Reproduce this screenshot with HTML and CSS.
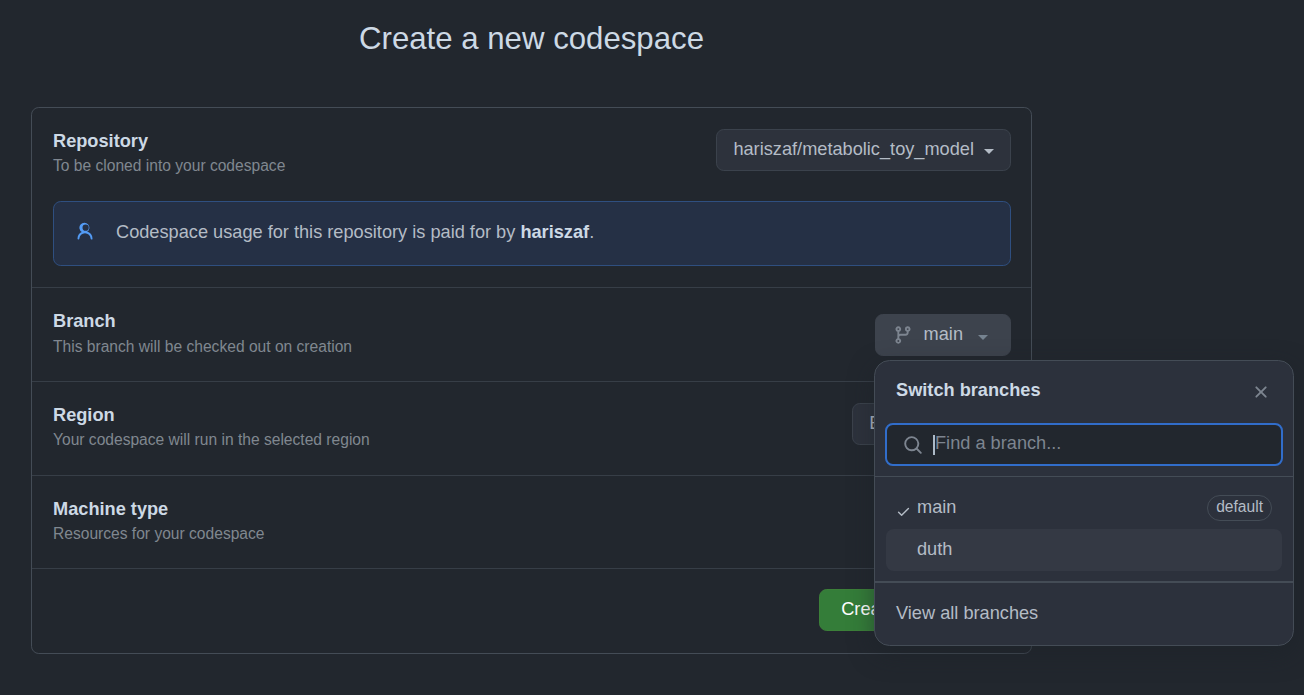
FILE: index.html
```html
<!DOCTYPE html>
<html lang="en">
<head>
    <meta charset="UTF-8">
    <title>Create a new codespace</title>
    <link rel="stylesheet" href="styles.css">
</head>
<body>
    <div class="page">
        <h1>Create a new codespace</h1>
        <div class="box">
            <div class="row row-repo">
                <div class="row-head">
                    <div>
                        <div class="label">Repository</div>
                        <div class="desc">To be cloned into your codespace</div>
                    </div>
                    <button class="button"><span class="button-text">hariszaf/metabolic_toy_model</span> <span class="caret"></span></button>
                </div>
                <div class="notice">
                    <svg class="notice-icon" width="20" height="20" viewBox="0 0 16 16"><path fill="currentColor" d="M10.561 8.073a6.005 6.005 0 0 1 3.432 5.142.75.75 0 1 1-1.498.07 4.5 4.5 0 0 0-8.99 0 .75.75 0 0 1-1.498-.07 6.004 6.004 0 0 1 3.431-5.142 3.999 3.999 0 1 1 4.123 0ZM11 4.5a2.5 2.5 0 1 0-5 0 2.5 2.5 0 0 0 5 0Z"/></svg>
                    <span class="notice-text">Codespace usage for this repository is paid for by <b>hariszaf</b>.</span>
                </div>
            </div>
            <div class="row row-head">
                <div class="row-text">
                    <div class="label">Branch</div>
                    <div class="desc">This branch will be checked out on creation</div>
                </div>
                <button class="button button-open">
                    <svg class="muted-icon" width="20" height="20" viewBox="0 0 16 16"><path fill="currentColor" d="M9.5 3.25a2.25 2.25 0 1 1 3 2.122V6A2.5 2.5 0 0 1 10 8.5H6a1 1 0 0 0-1 1v1.128a2.251 2.251 0 1 1-1.5 0V5.372a2.25 2.25 0 1 1 1.5 0v1.836A2.493 2.493 0 0 1 6 7h4a1 1 0 0 0 1-1v-.628A2.25 2.25 0 0 1 9.5 3.25Zm-6 0a.75.75 0 1 0 1.5 0 .75.75 0 0 0-1.5 0Zm8.25-.75a.75.75 0 1 0 0 1.5.75.75 0 0 0 0-1.5ZM4.25 12a.75.75 0 1 0 0 1.5.75.75 0 0 0 0-1.5Z"/></svg>
                    <span class="branch-name button-text">main</span>
                    <span class="caret caret-muted"></span>
                </button>
            </div>
            <div class="row row-head">
                <div>
                    <div class="label">Region</div>
                    <div class="desc">Your codespace will run in the selected region</div>
                </div>
                <button class="button"><span class="button-text">Europe West</span> <span class="caret"></span></button>
            </div>
            <div class="row row-head row-short">
                <div>
                    <div class="label">Machine type</div>
                    <div class="desc">Resources for your codespace</div>
                </div>
            </div>
            <div class="row row-foot">
                <button class="button-green"><span class="button-text">Create codespace</span></button>
            </div>
        </div>
    </div>

    <div class="overlay">
        <div class="overlay-head">
            <span class="overlay-title">Switch branches</span>
            <svg class="muted-icon" width="20" height="20" viewBox="0 0 16 16"><path fill="currentColor" d="M3.72 3.72a.75.75 0 0 1 1.06 0L8 6.94l3.22-3.22a.749.749 0 0 1 1.275.326.749.749 0 0 1-.215.734L9.06 8l3.22 3.22a.749.749 0 0 1-.326 1.275.749.749 0 0 1-.734-.215L8 9.06l-3.22 3.22a.751.751 0 0 1-1.042-.018.751.751 0 0 1-.018-1.042L6.94 8 3.72 4.78a.75.75 0 0 1 0-1.06Z"/></svg>
        </div>
        <div class="search">
            <svg class="muted-icon" width="20" height="20" viewBox="0 0 16 16"><path fill="currentColor" d="M10.68 11.74a6 6 0 0 1-7.922-8.982 6 6 0 0 1 8.982 7.922l3.04 3.04a.749.749 0 0 1-.326 1.275.749.749 0 0 1-.734-.215ZM11.5 7a4.499 4.499 0 1 0-8.997 0A4.499 4.499 0 0 0 11.5 7Z"/></svg>
            <span class="cursor"></span>
            <span class="placeholder">Find a branch...</span>
        </div>
        <div class="branch-list">
            <div class="branch">
                <svg class="check" width="15" height="15" viewBox="0 0 16 16"><path fill="currentColor" d="M13.78 4.22a.75.75 0 0 1 0 1.06l-7.25 7.25a.75.75 0 0 1-1.06 0L2.22 9.28a.751.751 0 0 1 .018-1.042.751.751 0 0 1 1.042-.018L6 10.94l6.72-6.72a.75.75 0 0 1 1.06 0Z"/></svg>
                <span class="branch-text">main</span>
                <span class="tag">default</span>
            </div>
            <div class="branch branch-hover">
                <span class="branch-text">duth</span>
            </div>
        </div>
        <div class="overlay-foot">View all branches</div>
    </div>
</body>
</html>
```

FILE: styles.css
```css
* {
    box-sizing: border-box;
}

html, body {
    height: 100%;
    overflow: hidden;
}

body {
    margin: 0;
    background-color: #22272e;
    color: #b4bcc6;
    font-family: "Liberation Sans", sans-serif;
    font-size: 18.2px;
}

.page {
    width: 1001px;
    margin-left: 31px;
}

h1 {
    margin: 0;
    height: 107px;
    padding-top: 18px;
    font-size: 31.2px;
    font-weight: 400;
    line-height: 42px;
    text-align: center;
    color: #cdd9e5;
}

.box {
    height: 547px;
    border: 1px solid #444c56;
    border-radius: 7.8px;
}

.row {
    padding: 21px 20px 21px 21px;
    border-bottom: 1px solid #373e47;
}

.row:last-child {
    border-bottom: 0;
}

.row-repo {
    height: 180px;
}

.row-head {
    display: flex;
    justify-content: space-between;
    align-items: flex-start;
}

.row.row-head {
    height: 94px;
    padding-top: 21px;
    padding-bottom: 0;
}

.row.row-short {
    height: 93px;
}

.row-text .desc {
    margin-top: 4px;
}

.label {
    padding-top: 1px;
    font-weight: 700;
    line-height: 23px;
    color: #cdd9e5;
}

.desc {
    margin-top: 3px;
    font-size: 15.6px;
    line-height: 20px;
    color: #808790;
}

.button {
    display: flex;
    align-items: center;
    flex: none;
    height: 42px;
    padding: 0 16px;
    border: 1px solid #3b424c;
    border-radius: 7.8px;
    background-color: #2d323c;
    color: inherit;
    font: inherit;
    white-space: nowrap;
}

.button-text {
    position: relative;
    top: -1px;
}

.caret {
    width: 0;
    height: 0;
    margin-left: 10px;
    margin-top: 2px;
    border-top: 5px solid currentColor;
    border-left: 5px solid transparent;
    border-right: 5px solid transparent;
}

.caret-muted {
    margin-left: 15px;
    margin-top: 4px;
    color: #768390;
}

.button-open {
    margin-top: 5px;
    padding: 0 22px 0 17px;
    border-color: #3d434d;
    background-color: #3d434d;
}

.branch-name {
    margin-left: 11px;
}

.muted-icon {
    flex: none;
    color: #7d8590;
}

.notice {
    display: flex;
    align-items: center;
    height: 65px;
    margin-top: 25px;
    padding-left: 21px;
    border: 1px solid #2f4f80;
    border-radius: 7.8px;
    background-color: #253045;
}

.notice-text {
    position: relative;
    top: -1px;
}

.notice b {
    color: #cdd9e5;
}

.notice-icon {
    flex: none;
    margin-top: -3px;
    margin-right: 21px;
    color: #539bf5;
}

.row-foot {
    display: flex;
    justify-content: flex-end;
    padding-top: 20px;
}

.button-green {
    width: 192px;
    height: 42px;
    border: 1px solid #3c8039;
    border-radius: 7.8px;
    background-color: #347d39;
    color: #ffffff;
    font: inherit;
}

.overlay {
    position: absolute;
    left: 874px;
    top: 360px;
    width: 420px;
    height: 286px;
    border: 1px solid #444c56;
    border-radius: 15.6px;
    background-color: #2c313c;
    box-shadow: 0 8px 24px rgba(28, 33, 40, 0.5);
}

.overlay-head {
    display: flex;
    justify-content: space-between;
    align-items: center;
    height: 62px;
    padding: 0 22px 0 21px;
}

.overlay-title {
    position: relative;
    top: -2px;
    font-weight: 700;
    color: #cdd9e5;
}

.search {
    display: flex;
    align-items: center;
    height: 43px;
    margin: 0 10px 10px;
    padding-left: 16px;
    border: 2px solid #316dca;
    border-radius: 7.8px;
    background-color: #22272e;
}

.cursor {
    width: 2px;
    height: 20px;
    margin-left: 10px;
    background-color: #adbac7;
}

.placeholder {
    position: relative;
    top: -1px;
    color: #7d8590;
}

.branch-list {
    height: 107px;
    padding: 10px 11px 0;
    border-top: 1px solid #444c56;
    border-bottom: 2px solid #444c56;
}

.branch {
    display: flex;
    align-items: center;
    position: relative;
    height: 42px;
    padding: 0 10px 0 31px;
    border-radius: 7.8px;
}

.branch-hover {
    background-color: #343944;
}

.branch-text {
    flex: 1;
    margin-top: -2px;
}

.check {
    position: absolute;
    left: 10px;
    top: 17px;
}

.tag {
    height: 26px;
    padding: 0 8px;
    border: 1px solid #444c56;
    border-radius: 13px;
    font-size: 15.6px;
    line-height: 22px;
}

.overlay-foot {
    padding: 19px 21px;
    line-height: 22px;
}
```
